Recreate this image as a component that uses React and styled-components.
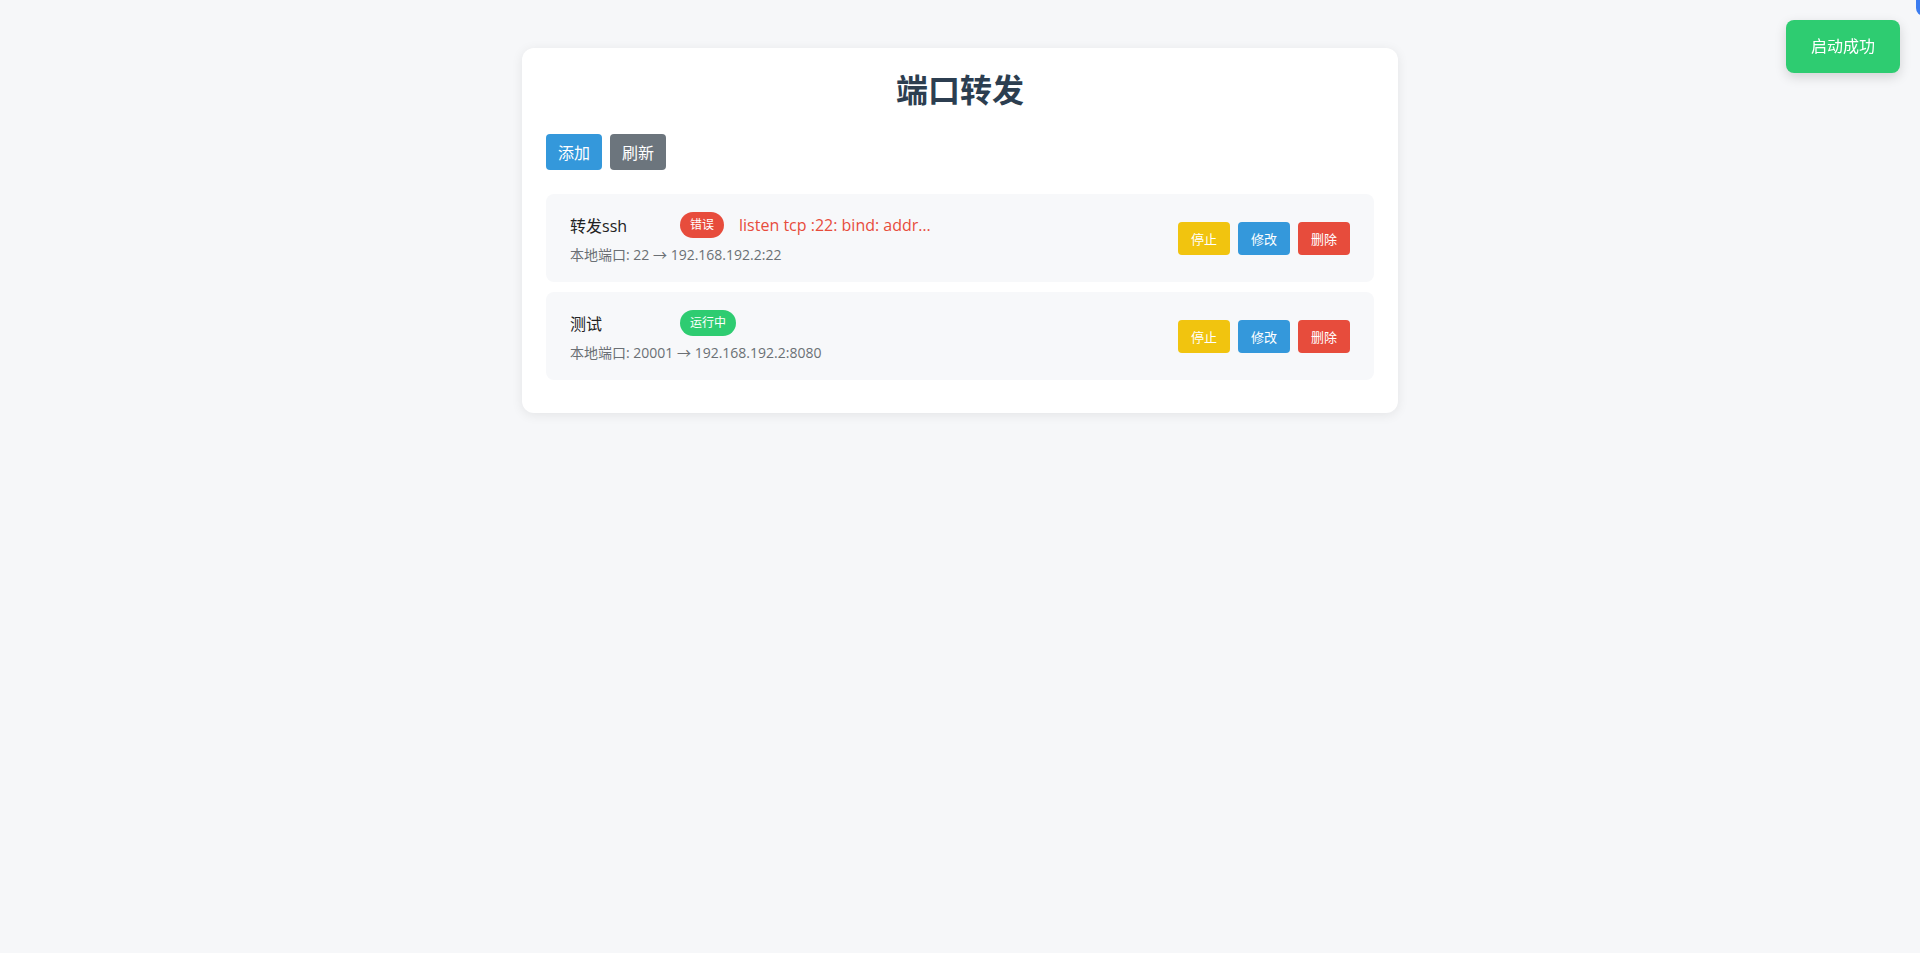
import React from 'react';
import styled, { createGlobalStyle } from 'styled-components';

const GlobalStyle = createGlobalStyle`
  html, body {
    margin: 0;
    padding: 0;
    background: #f6f7f9;
    font-family: 'Open Sans', 'Noto Sans CJK SC', sans-serif;
  }
`;

const COLORS = {
  blue: '#3498db',
  grey: '#6c757d',
  yellow: '#f1c40f',
  red: '#e74c3c',
  green: '#2ecc71',
};

const rules = [
  {
    id: 1,
    name: '转发ssh',
    status: 'error',
    error: 'listen tcp :22: bind: address already in use',
    localPort: 22,
    target: '192.168.192.2:22',
  },
  {
    id: 2,
    name: '测试',
    status: 'running',
    localPort: 20001,
    target: '192.168.192.2:8080',
  },
];

const Page = styled.div`
  padding-top: 48px;
  min-height: 953px;
  box-sizing: border-box;
`;

const Card = styled.div`
  width: 876px;
  margin: 0 auto;
  padding: 24px 24px 23px;
  box-sizing: border-box;
  background: #fff;
  border-radius: 12px;
  box-shadow: 0 2px 12px rgba(0, 0, 0, 0.08);
`;

const Title = styled.h1`
  margin: 0 0 26px;
  font-size: 32px;
  line-height: 36px;
  font-weight: 700;
  text-align: center;
  color: #2c3e50;
`;

const Toolbar = styled.div`
  display: flex;
  gap: 8px;
  margin-bottom: 24px;
`;

const Button = styled.button`
  border: none;
  border-radius: 4px;
  color: #fff;
  background: ${(p) => COLORS[p.color]};
  font-family: inherit;
  font-size: ${(p) => (p.small ? '13px' : '16px')};
  height: ${(p) => (p.small ? '33px' : '36px')};
  padding: 0 12px;
  min-width: ${(p) => (p.small ? '52px' : '56px')};
  cursor: pointer;
`;

const Item = styled.div`
  display: flex;
  align-items: center;
  justify-content: space-between;
  height: 88px;
  padding: 0 24px;
  box-sizing: border-box;
  margin-bottom: 10px;
  background: #f7f8fa;
  border-radius: 8px;
`;

const Info = styled.div`
  display: flex;
  flex-direction: column;
  gap: 7px;
`;

const NameRow = styled.div`
  display: flex;
  align-items: center;
  height: 27px;
`;

const Name = styled.span`
  width: 110px;
  font-size: 16px;
  color: #222;
`;

const Badge = styled.span`
  height: 26px;
  line-height: 26px;
  padding: 0 10px;
  border-radius: 13px;
  font-size: 12px;
  color: #fff;
  background: ${(p) => (p.status === 'error' ? COLORS.red : COLORS.green)};
`;

const ErrorText = styled.span`
  margin-left: 15px;
  max-width: 200px;
  font-size: 16px;
  color: ${COLORS.red};
  white-space: nowrap;
  overflow: hidden;
  text-overflow: ellipsis;
`;

const Sub = styled.div`
  font-size: 14px;
  line-height: 20px;
  color: #6b7075;
`;

const Actions = styled.div`
  display: flex;
  gap: 8px;
`;

const Toast = styled.div`
  position: fixed;
  top: 20px;
  right: 20px;
  padding: 15px 25px;
  line-height: 23px;
  font-size: 16px;
  color: #fff;
  background: ${COLORS.green};
  border-radius: 8px;
  box-shadow: 0 4px 12px rgba(0, 0, 0, 0.15);
`;

const ToastGhost = styled.div`
  position: fixed;
  top: -30px;
  right: -112px;
  width: 116px;
  height: 46px;
  background: #3b7cf0;
  border-radius: 8px;
`;

export default function App() {
  return (
    <Page>
      <GlobalStyle />
      <Card>
        <Title>端口转发</Title>
        <Toolbar>
          <Button color="blue">添加</Button>
          <Button color="grey">刷新</Button>
        </Toolbar>
        {rules.map((r) => (
          <Item key={r.id}>
            <Info>
              <NameRow>
                <Name>{r.name}</Name>
                <Badge status={r.status}>{r.status === 'error' ? '错误' : '运行中'}</Badge>
                {r.error && <ErrorText title={r.error}>{r.error}</ErrorText>}
              </NameRow>
              <Sub>
                本地端口: {r.localPort} → {r.target}
              </Sub>
            </Info>
            <Actions>
              <Button small color="yellow">停止</Button>
              <Button small color="blue">修改</Button>
              <Button small color="red">删除</Button>
            </Actions>
          </Item>
        ))}
      </Card>
      <Toast>启动成功</Toast>
      <ToastGhost />
    </Page>
  );
}
